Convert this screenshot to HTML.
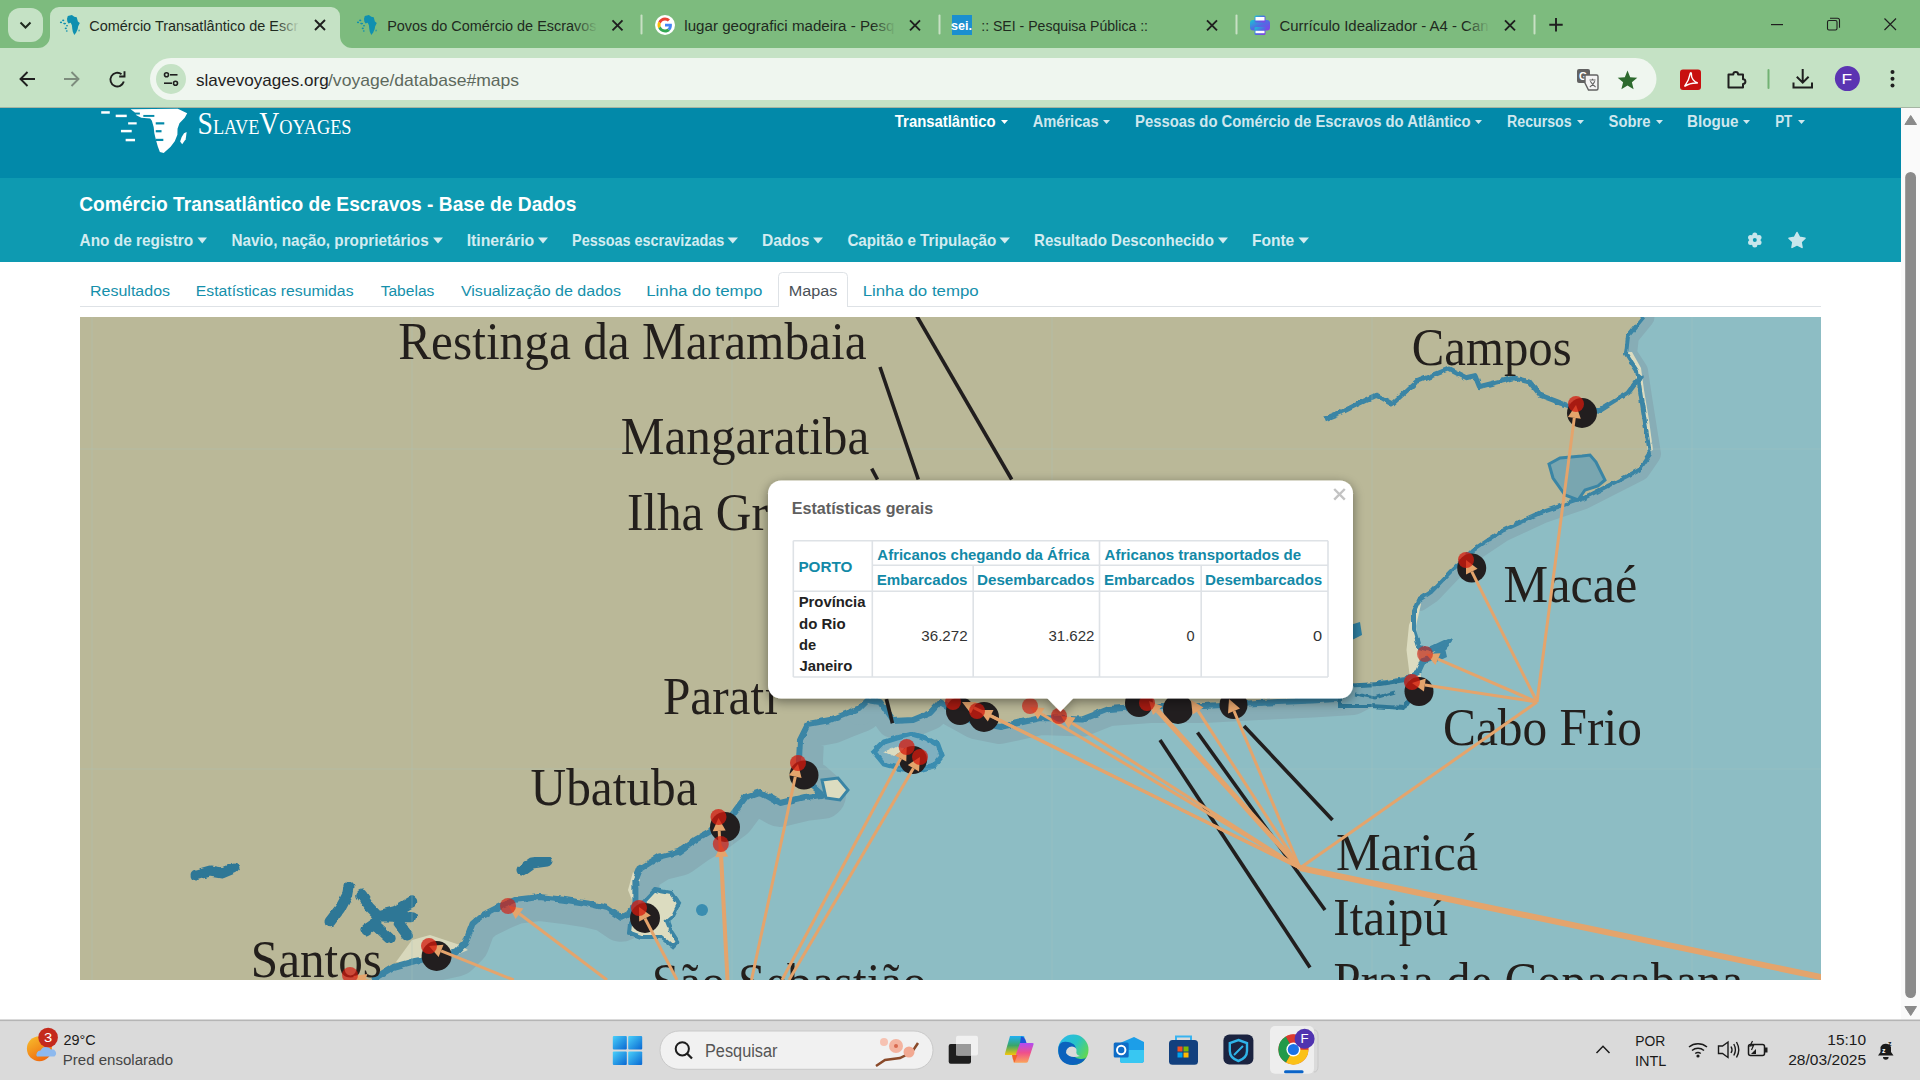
<!DOCTYPE html>
<html><head><meta charset="utf-8"><title>SlaveVoyages</title>
<style>*{margin:0;padding:0}html,body{width:1920px;height:1080px;overflow:hidden;background:#fff;font-family:"Liberation Sans",sans-serif}svg{display:block}</style>
</head><body>
<svg width="1920" height="1080" viewBox="0 0 1920 1080">
<rect x="0" y="0" width="1920" height="48" fill="#7dbb7e"/>
<rect x="8" y="8" width="35" height="34" rx="12" fill="#c5e2c5"/>
<path d="M20.5 22.5 L25.5 27.5 L30.5 22.5" fill="none" stroke="#1f2a1f" stroke-width="2"/>
<path d="M38 48 A12 12 0 0 0 50 36 V16 A9 9 0 0 1 59 7 H331 A9 9 0 0 1 340 16 V36 A12 12 0 0 0 352 48 Z" fill="#c5e2c5"/>
<g transform="translate(60,15)" fill="#0f90b0"><path d="M7.8 1.1 L11.9 0.1 L14.3 1.8 L16.7 2.3 L17.9 6.6 L19.8 8.1 L18.1 11.5 L17.7 13.9 L16.2 17.5 L14.3 19.9 L12.8 16.8 L12.3 13.9 L11.9 10.3 L10.7 7.8 L8.5 8.6 L7.3 6.6 L7 3.7Z M19.1 14.3 L19.8 15.8 L18.9 16.8 L18.4 15.6Z"/><ellipse cx="3.2" cy="5.4" rx="1.1" ry="0.8"/><ellipse cx="1" cy="7.4" rx="1.1" ry="0.8"/><ellipse cx="4.6" cy="8.6" rx="1.5" ry="0.8"/><ellipse cx="7" cy="10.7" rx="1" ry="0.8"/><ellipse cx="5.8" cy="13.4" rx="1.1" ry="0.8"/><ellipse cx="6.8" cy="16" rx="0.9" ry="0.8"/></g>
<text x="89.28" y="30.80" font-family='"Liberation Sans",sans-serif' font-size="15.5" font-weight="400" fill="#1f2a1f" textLength="208.95" lengthAdjust="spacingAndGlyphs" >Comércio Transatlântico de Escr</text>
<defs><linearGradient id="fa" x1="0" x2="1"><stop offset="0" stop-color="#c5e2c5" stop-opacity="0"/><stop offset="1" stop-color="#c5e2c5"/></linearGradient><linearGradient id="fg" x1="0" x2="1"><stop offset="0" stop-color="#7dbb7e" stop-opacity="0"/><stop offset="1" stop-color="#7dbb7e"/></linearGradient></defs>
<rect x="276" y="14" width="24" height="22" fill="url(#fa)"/>
<path d="M315 20L325 30M325 20L315 30" stroke="#1f1f1f" stroke-width="1.9"/>
<g transform="translate(357,15)" fill="#0f90b0"><path d="M7.8 1.1 L11.9 0.1 L14.3 1.8 L16.7 2.3 L17.9 6.6 L19.8 8.1 L18.1 11.5 L17.7 13.9 L16.2 17.5 L14.3 19.9 L12.8 16.8 L12.3 13.9 L11.9 10.3 L10.7 7.8 L8.5 8.6 L7.3 6.6 L7 3.7Z M19.1 14.3 L19.8 15.8 L18.9 16.8 L18.4 15.6Z"/><ellipse cx="3.2" cy="5.4" rx="1.1" ry="0.8"/><ellipse cx="1" cy="7.4" rx="1.1" ry="0.8"/><ellipse cx="4.6" cy="8.6" rx="1.5" ry="0.8"/><ellipse cx="7" cy="10.7" rx="1" ry="0.8"/><ellipse cx="5.8" cy="13.4" rx="1.1" ry="0.8"/><ellipse cx="6.8" cy="16" rx="0.9" ry="0.8"/></g>
<text x="387.15" y="30.80" font-family='"Liberation Sans",sans-serif' font-size="15.5" font-weight="400" fill="#1f2a1f" textLength="209.38" lengthAdjust="spacingAndGlyphs" >Povos do Comércio de Escravos</text>
<rect x="574" y="14" width="24" height="22" fill="url(#fg)"/>
<path d="M612.5 20.3L622.5 30.3M622.5 20.3L612.5 30.3" stroke="#1f1f1f" stroke-width="1.9"/>
<rect x="640.5" y="14.5" width="2" height="20" rx="1" fill="#c8e0c4"/>
<circle cx="665" cy="25" r="10" fill="#fff"/>
<g transform="translate(657.5,17.5) scale(0.3125)"><path fill="#EA4335" d="M24 9.5c3.5 0 6.6 1.2 9.1 3.6l6.8-6.8C35.8 2.4 30.3 0 24 0 14.6 0 6.6 5.4 2.6 13.3l7.9 6.1C12.4 13.6 17.7 9.5 24 9.5z"/><path fill="#4285F4" d="M46.1 24.5c0-1.6-.1-3.1-.4-4.5H24v9h12.4c-.5 2.9-2.2 5.3-4.6 6.9l7.7 6C43.9 37.7 46.1 31.6 46.1 24.5z"/><path fill="#FBBC05" d="M10.5 28.6c-.5-1.4-.8-3-.8-4.6s.3-3.2.8-4.6l-7.9-6.1C.9 16.6 0 20.2 0 24s.9 7.4 2.6 10.7l7.9-6.1z"/><path fill="#34A853" d="M24 48c6.5 0 11.9-2.1 15.9-5.8l-7.7-6c-2.2 1.5-5 2.3-8.2 2.3-6.3 0-11.6-4.2-13.5-9.9l-7.9 6.1C6.6 42.6 14.6 48 24 48z"/></g>
<text x="684.32" y="30.80" font-family='"Liberation Sans",sans-serif' font-size="15.5" font-weight="400" fill="#1f2a1f" textLength="210.09" lengthAdjust="spacingAndGlyphs" >lugar geografici madeira - Pesq</text>
<rect x="872" y="14" width="24" height="22" fill="url(#fg)"/>
<path d="M910 20.3L920 30.3M920 20.3L910 30.3" stroke="#1f1f1f" stroke-width="1.9"/>
<rect x="938.5" y="14.5" width="2" height="20" rx="1" fill="#c8e0c4"/>
<rect x="952" y="15" width="20" height="20" fill="#1b8fcf"/>
<text x="951" y="30" font-family='"Liberation Sans",sans-serif' font-size="13" font-weight="700" fill="#fff" textLength="21" lengthAdjust="spacingAndGlyphs">sei.</text>
<text x="981.23" y="30.80" font-family='"Liberation Sans",sans-serif' font-size="15.5" font-weight="400" fill="#1f2a1f" textLength="166.79" lengthAdjust="spacingAndGlyphs" >:: SEI - Pesquisa Pública ::</text>
<path d="M1207 20.3L1217 30.3M1217 20.3L1207 30.3" stroke="#1f1f1f" stroke-width="1.9"/>
<rect x="1235.5" y="14.5" width="2" height="20" rx="1" fill="#c8e0c4"/>
<defs><linearGradient id="pg" x1="0" y1="0" x2="1" y2="1"><stop offset="0" stop-color="#18c6d4"/><stop offset="0.5" stop-color="#4f6de2"/><stop offset="1" stop-color="#8a3ce6"/></linearGradient></defs>
<g transform="translate(1250,15)"><rect x="0" y="5" width="20" height="10.5" rx="3" fill="url(#pg)"/><rect x="4.5" y="0.5" width="11" height="7" rx="1.5" fill="url(#pg)"/><rect x="5.5" y="2" width="9" height="3.5" fill="#fff"/><rect x="4.5" y="12" width="11" height="8" rx="1.5" fill="url(#pg)"/><rect x="5.5" y="15.8" width="9" height="2.4" fill="#fff"/></g>
<text x="1279.55" y="30.80" font-family='"Liberation Sans",sans-serif' font-size="15.5" font-weight="400" fill="#1f2a1f" textLength="208.94" lengthAdjust="spacingAndGlyphs" >Currículo Idealizador - A4 - Can</text>
<rect x="1466" y="14" width="24" height="22" fill="url(#fg)"/>
<path d="M1505 20.3L1515 30.3M1515 20.3L1505 30.3" stroke="#1f1f1f" stroke-width="1.9"/>
<rect x="1533.5" y="14.5" width="2" height="20" rx="1" fill="#c8e0c4"/>
<path d="M1556 18V31.5M1549.3 24.7H1562.7" stroke="#1f1f1f" stroke-width="1.9"/>
<rect x="1771" y="24" width="12" height="1.2" fill="#1f1f1f"/>
<g fill="none" stroke="#1f1f1f" stroke-width="1.1"><rect x="1827.5" y="20.5" width="9.5" height="9.5" rx="1.5"/><path d="M1830 18.3 H1837.5 A2 2 0 0 1 1839.5 20.3 V27.8"/></g>
<path d="M1884.5 18.5L1896 30M1896 18.5L1884.5 30" stroke="#1f1f1f" stroke-width="1.2"/>
<rect x="0" y="48" width="1920" height="59" fill="#c5e2c5"/>
<rect x="0" y="107" width="1920" height="1" fill="#a5b5a3"/>
<path d="M35 79H21M27.5 72L20.5 79L27.5 86" fill="none" stroke="#1f1f1f" stroke-width="1.9"/>
<path d="M64 79H78M71.5 72L78.5 79L71.5 86" fill="none" stroke="#7d8c7d" stroke-width="1.9"/>
<path d="M123.8 81.5A6.8 6.8 0 1 1 121.5 74.3" fill="none" stroke="#1f1f1f" stroke-width="1.9"/><path d="M124.5 71.2V76.5H119.2" fill="none" stroke="#1f1f1f" stroke-width="1.9"/>
<rect x="150" y="58" width="1506.5" height="42" rx="21" fill="#eff6ef"/>
<circle cx="171" cy="79" r="15" fill="#c5e2c5"/>
<g fill="none" stroke="#1f1f1f" stroke-width="1.6"><circle cx="166.5" cy="74.8" r="2"/><path d="M170 74.8H177.5"/><circle cx="175.5" cy="83.2" r="2"/><path d="M164 83.2H172"/></g>
<text x="195.99" y="85.50" font-family='"Liberation Sans",sans-serif' font-size="17" font-weight="400" fill="#1f1f1f" textLength="132.66" lengthAdjust="spacingAndGlyphs" >slavevoyages.org</text>
<text x="328.00" y="85.50" font-family='"Liberation Sans",sans-serif' font-size="17" font-weight="400" fill="#5d695d" textLength="191.14" lengthAdjust="spacingAndGlyphs" >/voyage/database#maps</text>
<g transform="translate(1577,69)"><rect x="0" y="0" width="13" height="14" rx="2" fill="#626262"/><text x="2" y="11" font-family='"Liberation Sans",sans-serif' font-size="10.5" font-weight="700" fill="#fff">G</text><path d="M8 6H19.5A1.5 1.5 0 0 1 21 7.5V19.5A1.5 1.5 0 0 1 19.5 21H11.5L8 14Z" fill="#f4f4f4" stroke="#626262" stroke-width="1.4"/><path d="M12.5 11H18.5M15.5 9.8V11M13.3 12.2Q16 16.5 18.6 18M17.8 12.2Q16 16.5 12.8 18" fill="none" stroke="#626262" stroke-width="1.1"/></g>
<path d="M1627.5 70.5L1630.2 77.2L1637.3 77.7L1631.9 82.3L1633.6 89.3L1627.5 85.5L1621.4 89.3L1623.1 82.3L1617.7 77.7L1624.8 77.2Z" fill="#2d6a2e"/>
<rect x="1680" y="69.5" width="21" height="20.5" rx="3" fill="#c8100f"/>
<path d="M1684.5 86.5C1687 83 1689.5 78 1690.3 73.3C1690.8 72.3 1691.5 72.8 1691.4 74C1691 78 1694 82 1697.8 83C1693.8 82.8 1688 84 1684.5 86.5Z" fill="none" stroke="#fff" stroke-width="1.4"/>
<path d="M1728.5 74.5H1733.3A2.4 2.4 0 0 1 1738.1 74.5H1743V79.2A2.4 2.4 0 0 1 1743 84V87.5H1728.5Z" fill="none" stroke="#1f1f1f" stroke-width="2" stroke-linejoin="round"/>
<rect x="1767.5" y="69" width="2" height="20" rx="1" fill="#72b274"/>
<path d="M1802.7 69V82.5M1796.8 76.8L1802.7 82.7L1808.6 76.8M1793.5 82.5V87.5H1812V82.5" fill="none" stroke="#1f1f1f" stroke-width="2"/>
<circle cx="1847.4" cy="78.6" r="12.5" fill="#5b34b2"/>
<text x="1841.61" y="83.80" font-family='"Liberation Sans",sans-serif' font-size="14" font-weight="400" fill="#fff" textLength="10.60" lengthAdjust="spacingAndGlyphs" >F</text>
<circle cx="1892.5" cy="72" r="2" fill="#1f1f1f"/><circle cx="1892.5" cy="78.8" r="2" fill="#1f1f1f"/><circle cx="1892.5" cy="85.6" r="2" fill="#1f1f1f"/>
<rect x="0" y="108" width="1901" height="70" fill="#0289a9"/>
<rect x="0" y="178" width="1901" height="84" fill="#0e9ab1"/>
<g transform="translate(95,105) scale(0.13802)"><path fill="#fff" d="M258 30 L600 28 L668 60 L650 92 L612 132 L598 172 L597 215 L578 262 L548 302 L498 348 L470 340 L455 300 L442 255 L430 205 L425 160 L412 115 L400 98 L335 92 L300 75 L285 50 Z"/><path fill="#fff" d="M645 205 L664 196 L657 248 L632 284 L617 264 L628 232 Z"/><g fill="#fff"><rect x="45" y="45" width="62" height="18"/><rect x="150" y="70" width="80" height="18"/><rect x="240" y="125" width="62" height="16"/><rect x="188" y="180" width="78" height="18"/><rect x="222" y="245" width="68" height="18"/></g><g fill="#0289a9"><rect x="280" y="55" width="45" height="14"/><rect x="350" y="72" width="80" height="14"/><rect x="440" y="125" width="62" height="16"/><rect x="440" y="182" width="42" height="16"/><rect x="440" y="245" width="55" height="16"/></g></g>
<text x="197.5" y="133.8" font-family='"Liberation Serif",serif' fill="#fff" font-size="31" textLength="154" lengthAdjust="spacingAndGlyphs">S<tspan font-size="20.5">LAVE</tspan>V<tspan font-size="20.5">OYAGES</tspan></text>
<text x="894.85" y="127.00" font-family='"Liberation Sans",sans-serif' font-size="16" font-weight="700" fill="#ffffff" textLength="100.74" lengthAdjust="spacingAndGlyphs" >Transatlântico</text>
<path d="M1001 120H1008L1004.5 124Z" fill="#ffffff"/>
<text x="1032.63" y="127.00" font-family='"Liberation Sans",sans-serif' font-size="16" font-weight="700" fill="#cfe7ee" textLength="66.00" lengthAdjust="spacingAndGlyphs" >Américas</text>
<path d="M1103 120H1110L1106.5 124Z" fill="#cfe7ee"/>
<text x="1135.04" y="127.00" font-family='"Liberation Sans",sans-serif' font-size="16" font-weight="700" fill="#cfe7ee" textLength="335.59" lengthAdjust="spacingAndGlyphs" >Pessoas do Comércio de Escravos do Atlântico</text>
<path d="M1475 120H1482L1478.5 124Z" fill="#cfe7ee"/>
<text x="1507.08" y="127.00" font-family='"Liberation Sans",sans-serif' font-size="16" font-weight="700" fill="#cfe7ee" textLength="64.53" lengthAdjust="spacingAndGlyphs" >Recursos</text>
<path d="M1577 120H1584L1580.5 124Z" fill="#cfe7ee"/>
<text x="1608.56" y="127.00" font-family='"Liberation Sans",sans-serif' font-size="16" font-weight="700" fill="#cfe7ee" textLength="41.95" lengthAdjust="spacingAndGlyphs" >Sobre</text>
<path d="M1656 120H1663L1659.5 124Z" fill="#cfe7ee"/>
<text x="1687.01" y="127.00" font-family='"Liberation Sans",sans-serif' font-size="16" font-weight="700" fill="#cfe7ee" textLength="51.50" lengthAdjust="spacingAndGlyphs" >Blogue</text>
<path d="M1743 120H1750L1746.5 124Z" fill="#cfe7ee"/>
<text x="1775.13" y="127.00" font-family='"Liberation Sans",sans-serif' font-size="16" font-weight="700" fill="#cfe7ee" textLength="17.04" lengthAdjust="spacingAndGlyphs" >PT</text>
<path d="M1798 120H1805L1801.5 124Z" fill="#cfe7ee"/>
<text x="79.23" y="210.60" font-family='"Liberation Sans",sans-serif' font-size="20.5" font-weight="700" fill="#ffffff" textLength="497.22" lengthAdjust="spacingAndGlyphs" >Comércio Transatlântico de Escravos - Base de Dados</text>
<text x="79.62" y="246.40" font-family='"Liberation Sans",sans-serif' font-size="17" font-weight="700" fill="#d3ecf0" textLength="113.60" lengthAdjust="spacingAndGlyphs" >Ano de registro</text>
<path d="M197.5 237.5H207L202.25 243.5Z" fill="#d3ecf0"/>
<text x="231.51" y="246.40" font-family='"Liberation Sans",sans-serif' font-size="17" font-weight="700" fill="#d3ecf0" textLength="197.15" lengthAdjust="spacingAndGlyphs" >Navio, nação, proprietários</text>
<path d="M433 237.5H443L438.0 243.5Z" fill="#d3ecf0"/>
<text x="466.67" y="246.40" font-family='"Liberation Sans",sans-serif' font-size="17" font-weight="700" fill="#d3ecf0" textLength="67.54" lengthAdjust="spacingAndGlyphs" >Itinerário</text>
<path d="M538 237.5H548L543.0 243.5Z" fill="#d3ecf0"/>
<text x="572.06" y="246.40" font-family='"Liberation Sans",sans-serif' font-size="17" font-weight="700" fill="#d3ecf0" textLength="152.19" lengthAdjust="spacingAndGlyphs" >Pessoas escravizadas</text>
<path d="M727.5 237.5H738L732.75 243.5Z" fill="#d3ecf0"/>
<text x="761.99" y="246.40" font-family='"Liberation Sans",sans-serif' font-size="17" font-weight="700" fill="#d3ecf0" textLength="47.45" lengthAdjust="spacingAndGlyphs" >Dados</text>
<path d="M813 237.5H823L818.0 243.5Z" fill="#d3ecf0"/>
<text x="847.39" y="246.40" font-family='"Liberation Sans",sans-serif' font-size="17" font-weight="700" fill="#d3ecf0" textLength="148.82" lengthAdjust="spacingAndGlyphs" >Capitão e Tripulação</text>
<path d="M999.5 237.5H1010L1004.75 243.5Z" fill="#d3ecf0"/>
<text x="1034.02" y="246.40" font-family='"Liberation Sans",sans-serif' font-size="17" font-weight="700" fill="#d3ecf0" textLength="180.01" lengthAdjust="spacingAndGlyphs" >Resultado Desconhecido</text>
<path d="M1218 237.5H1228L1223.0 243.5Z" fill="#d3ecf0"/>
<text x="1251.99" y="246.40" font-family='"Liberation Sans",sans-serif' font-size="17" font-weight="700" fill="#d3ecf0" textLength="42.28" lengthAdjust="spacingAndGlyphs" >Fonte</text>
<path d="M1298.5 237.5H1309L1303.75 243.5Z" fill="#d3ecf0"/>
<g transform="translate(1754.8,240)" fill="#c8e6ec"><circle r="5.6"/><circle cx="0.00" cy="-4.90" r="2.5"/><circle cx="4.24" cy="-2.45" r="2.5"/><circle cx="4.24" cy="2.45" r="2.5"/><circle cx="0.00" cy="4.90" r="2.5"/><circle cx="-4.24" cy="2.45" r="2.5"/><circle cx="-4.24" cy="-2.45" r="2.5"/><circle r="2" fill="#0e9ab1"/></g>
<path d="M1797 232.5L1799.5 237.4L1805 238.2L1801 242L1802 247.4L1797 244.8L1792 247.4L1793 242L1789 238.2L1794.5 237.4Z" fill="#c8e6ec" stroke="#c8e6ec" stroke-width="1.6" stroke-linejoin="round"/>
<rect x="80" y="306" width="1741" height="1" fill="#dee2e6"/>
<path d="M778.5 307V276.5A4 4 0 0 1 782.5 272.5H843.5A4 4 0 0 1 847.5 276.5V307" fill="#fff" stroke="#dee2e6" stroke-width="1"/>
<rect x="779" y="305.5" width="68" height="2" fill="#fff"/>
<text x="89.97" y="296.00" font-family='"Liberation Sans",sans-serif' font-size="15.5" font-weight="400" fill="#1590ab" textLength="80.06" lengthAdjust="spacingAndGlyphs" >Resultados</text>
<text x="195.74" y="296.00" font-family='"Liberation Sans",sans-serif' font-size="15.5" font-weight="400" fill="#1590ab" textLength="157.79" lengthAdjust="spacingAndGlyphs" >Estatísticas resumidas</text>
<text x="380.69" y="296.00" font-family='"Liberation Sans",sans-serif' font-size="15.5" font-weight="400" fill="#1590ab" textLength="53.64" lengthAdjust="spacingAndGlyphs" >Tabelas</text>
<text x="460.92" y="296.00" font-family='"Liberation Sans",sans-serif' font-size="15.5" font-weight="400" fill="#1590ab" textLength="160.13" lengthAdjust="spacingAndGlyphs" >Visualização de dados</text>
<text x="646.15" y="296.00" font-family='"Liberation Sans",sans-serif' font-size="15.5" font-weight="400" fill="#1590ab" textLength="116.26" lengthAdjust="spacingAndGlyphs" >Linha do tempo</text>
<text x="862.65" y="296.00" font-family='"Liberation Sans",sans-serif' font-size="15.5" font-weight="400" fill="#1590ab" textLength="116.01" lengthAdjust="spacingAndGlyphs" >Linha do tempo</text>
<text x="788.70" y="296.00" font-family='"Liberation Sans",sans-serif' font-size="15.5" font-weight="400" fill="#495057" textLength="48.64" lengthAdjust="spacingAndGlyphs" >Mapas</text>
<rect x="1901" y="108" width="19" height="912" fill="#fafafa"/>
<path d="M1910.7 115.5L1916.5 124.5H1904.9Z" fill="#8a8a8a" stroke="#8a8a8a" stroke-width="1" stroke-linejoin="round"/>
<rect x="1905.2" y="172" width="10.8" height="826" rx="5.4" fill="#8a8a8a"/>
<path d="M1910.7 1015.5L1916.5 1006.5H1904.9Z" fill="#8a8a8a" stroke="#8a8a8a" stroke-width="1" stroke-linejoin="round"/>
<defs><clipPath id="mc"><rect x="80" y="317" width="1741" height="663"/></clipPath>
<clipPath id="sc"><path d="M371.9 980.0 L393.4 967.0 L415.0 961.0 L436.0 957.0 L455.7 952.5 L465.3 943.0 L472.5 923.7 L482.0 915.4 L501.2 905.8 L515.6 899.8 L539.6 897.0 L563.5 899.8 L587.5 903.4 L606.7 908.0 L621.0 917.8 L628.2 914.2 L635.4 904.6 L635.4 880.6 L640.2 868.6 L659.4 856.7 L678.5 851.9 L695.3 839.9 L712.0 830.3 L731.2 816.0 L745.6 796.8 L760.0 792.0 L780.0 803.0 L805.0 797.0 L822.0 795.0 L812.0 786.0 L800.0 781.0 L799.0 760.0 L800.0 740.0 L808.0 724.0 L830.0 720.0 L847.0 713.0 L860.0 708.0 L868.0 700.0 L880.0 702.0 L893.0 721.0 L913.0 720.0 L930.0 713.0 L940.0 702.0 L957.0 712.0 L975.0 722.0 L1000.0 727.0 L1041.0 718.0 L1082.0 719.6 L1109.0 709.0 L1150.0 706.0 L1204.0 706.0 L1258.0 703.0 L1312.0 700.6 L1353.0 698.0 L1380.0 684.0 L1405.0 680.0 L1418.0 672.0 L1423.0 661.0 L1434.0 658.0 L1449.0 641.0 L1430.0 650.0 L1419.0 647.0 L1414.0 630.0 L1414.0 611.0 L1419.0 600.0 L1431.0 592.0 L1451.0 571.0 L1472.0 551.0 L1502.0 531.0 L1543.0 512.0 L1584.0 498.0 L1639.0 470.0 L1650.0 454.0 L1641.0 397.5 L1637.0 371.0 L1626.0 354.0 L1628.0 336.0 L1643.5 317.0 L1821 317 L1821 980 Z"/></clipPath>
<filter id="rough" x="-5%" y="-5%" width="110%" height="110%"><feTurbulence type="fractalNoise" baseFrequency="0.12" numOctaves="2" seed="3"/><feDisplacementMap in="SourceGraphic" scale="4" xChannelSelector="R" yChannelSelector="G"/></filter></defs>
<g clip-path="url(#mc)">
<rect x="80" y="317" width="1741" height="663" fill="#bab898"/>
<path d="M371.9 980.0 L393.4 967.0 L415.0 961.0 L436.0 957.0 L455.7 952.5 L465.3 943.0 L472.5 923.7 L482.0 915.4 L501.2 905.8 L515.6 899.8 L539.6 897.0 L563.5 899.8 L587.5 903.4 L606.7 908.0 L621.0 917.8 L628.2 914.2 L635.4 904.6 L635.4 880.6 L640.2 868.6 L659.4 856.7 L678.5 851.9 L695.3 839.9 L712.0 830.3 L731.2 816.0 L745.6 796.8 L760.0 792.0 L780.0 803.0 L805.0 797.0 L822.0 795.0 L812.0 786.0 L800.0 781.0 L799.0 760.0 L800.0 740.0 L808.0 724.0 L830.0 720.0 L847.0 713.0 L860.0 708.0 L868.0 700.0 L880.0 702.0 L893.0 721.0 L913.0 720.0 L930.0 713.0 L940.0 702.0 L957.0 712.0 L975.0 722.0 L1000.0 727.0 L1041.0 718.0 L1082.0 719.6 L1109.0 709.0 L1150.0 706.0 L1204.0 706.0 L1258.0 703.0 L1312.0 700.6 L1353.0 698.0 L1380.0 684.0 L1405.0 680.0 L1418.0 672.0 L1423.0 661.0 L1434.0 658.0 L1449.0 641.0 L1430.0 650.0 L1419.0 647.0 L1414.0 630.0 L1414.0 611.0 L1419.0 600.0 L1431.0 592.0 L1451.0 571.0 L1472.0 551.0 L1502.0 531.0 L1543.0 512.0 L1584.0 498.0 L1639.0 470.0 L1650.0 454.0 L1641.0 397.5 L1637.0 371.0 L1626.0 354.0 L1628.0 336.0 L1643.5 317.0 L1821 317 L1821 980 Z" fill="#8dbdc4"/>
<g clip-path="url(#sc)"><path d="M371.9 980.0 L393.4 967.0 L415.0 961.0 L436.0 957.0 L455.7 952.5 L465.3 943.0 L472.5 923.7 L482.0 915.4 L501.2 905.8 L515.6 899.8 L539.6 897.0 L563.5 899.8 L587.5 903.4 L606.7 908.0 L621.0 917.8 L628.2 914.2 L635.4 904.6 L635.4 880.6 L640.2 868.6 L659.4 856.7 L678.5 851.9 L695.3 839.9 L712.0 830.3 L731.2 816.0 L745.6 796.8 L760.0 792.0 L780.0 803.0 L805.0 797.0 L822.0 795.0 L812.0 786.0 L800.0 781.0 L799.0 760.0 L800.0 740.0 L808.0 724.0 L830.0 720.0 L847.0 713.0 L860.0 708.0 L868.0 700.0 L880.0 702.0 L893.0 721.0 L913.0 720.0 L930.0 713.0 L940.0 702.0 L957.0 712.0 L975.0 722.0 L1000.0 727.0 L1041.0 718.0 L1082.0 719.6 L1109.0 709.0 L1150.0 706.0 L1204.0 706.0 L1258.0 703.0 L1312.0 700.6 L1353.0 698.0 L1380.0 684.0 L1405.0 680.0 L1418.0 672.0 L1423.0 661.0 L1434.0 658.0 L1449.0 641.0 L1430.0 650.0 L1419.0 647.0 L1414.0 630.0 L1414.0 611.0 L1419.0 600.0 L1431.0 592.0 L1451.0 571.0 L1472.0 551.0 L1502.0 531.0 L1543.0 512.0 L1584.0 498.0 L1639.0 470.0 L1650.0 454.0 L1641.0 397.5 L1637.0 371.0 L1626.0 354.0 L1628.0 336.0 L1643.5 317.0" fill="none" stroke="#87adb6" stroke-width="0" stroke-linejoin="round"/><path d="M371.9 980.0 L393.4 967.0 L415.0 961.0 L436.0 957.0 L455.7 952.5 L465.3 943.0 L472.5 923.7 L482.0 915.4 L501.2 905.8 L515.6 899.8 L539.6 897.0 L563.5 899.8 L587.5 903.4 L606.7 908.0 L621.0 917.8 L628.2 914.2 L635.4 904.6 L635.4 880.6 L640.2 868.6 L659.4 856.7 L678.5 851.9 L695.3 839.9 L712.0 830.3 L731.2 816.0 L745.6 796.8 L760.0 792.0 L780.0 803.0 L805.0 797.0 L822.0 795.0 L812.0 786.0 L800.0 781.0 L799.0 760.0 L800.0 740.0 L808.0 724.0 L830.0 720.0 L847.0 713.0 L860.0 708.0 L868.0 700.0 L880.0 702.0" fill="none" stroke="#87adb6" stroke-width="48" stroke-linejoin="round" stroke-linecap="round"/><path d="M860.0 708.0 L868.0 700.0 L880.0 702.0 L893.0 721.0 L913.0 720.0 L930.0 713.0 L940.0 702.0 L957.0 712.0 L975.0 722.0 L1000.0 727.0 L1041.0 718.0 L1082.0 719.6 L1109.0 709.0 L1150.0 706.0 L1204.0 706.0 L1258.0 703.0 L1312.0 700.6 L1353.0 698.0 L1380.0 684.0 L1405.0 680.0" fill="none" stroke="#87adb6" stroke-width="34" stroke-linejoin="round" stroke-linecap="round"/><path d="M1419.0 600.0 L1431.0 592.0 L1451.0 571.0 L1472.0 551.0 L1502.0 531.0 L1543.0 512.0 L1584.0 498.0 L1639.0 470.0 L1650.0 454.0 L1641.0 397.5 L1637.0 371.0 L1626.0 354.0 L1628.0 336.0 L1643.5 317.0" fill="none" stroke="#87adb6" stroke-width="22" stroke-linejoin="round" stroke-linecap="round"/></g>
<path d="M1418 602 L1409 625 L1406.5 650 L1410 678 L1421 677 L1418 650 L1416 626 L1421 604Z" fill="#dcdcc0"/>
<path d="M1627 352 L1630 362 L1636 375 L1640 400 L1645 430 L1648 452 L1653 450 L1649 420 L1644 390 L1641 368 L1632 352Z" fill="#dcdcc0"/>
<path d="M396 962 L412 940 L430 935 L460 945 L468 950 L440 962Z" fill="#dcdcc0" opacity="0.9"/>
<path d="M633 872 L628 890 L634 905 L640 880Z" fill="#dcdcc0"/>
<g filter="url(#rough)"><path d="M371.9 980.0 L393.4 967.0 L415.0 961.0 L436.0 957.0 L455.7 952.5 L465.3 943.0 L472.5 923.7 L482.0 915.4 L501.2 905.8 L515.6 899.8 L539.6 897.0 L563.5 899.8 L587.5 903.4 L606.7 908.0 L621.0 917.8 L628.2 914.2 L635.4 904.6 L635.4 880.6 L640.2 868.6 L659.4 856.7 L678.5 851.9 L695.3 839.9 L712.0 830.3 L731.2 816.0 L745.6 796.8 L760.0 792.0 L780.0 803.0 L805.0 797.0 L822.0 795.0 L812.0 786.0 L800.0 781.0 L799.0 760.0 L800.0 740.0 L808.0 724.0 L830.0 720.0 L847.0 713.0 L860.0 708.0 L868.0 700.0 L880.0 702.0 L893.0 721.0 L913.0 720.0 L930.0 713.0 L940.0 702.0 L957.0 712.0 L975.0 722.0 L1000.0 727.0 L1041.0 718.0 L1082.0 719.6 L1109.0 709.0 L1150.0 706.0 L1204.0 706.0 L1258.0 703.0 L1312.0 700.6 L1353.0 698.0 L1380.0 684.0 L1405.0 680.0 L1418.0 672.0 L1423.0 661.0 L1434.0 658.0 L1449.0 641.0 L1430.0 650.0" fill="none" stroke="#3a85a5" stroke-width="6" stroke-linejoin="round"/><path d="M1449.0 641.0 L1430.0 650.0 L1419.0 647.0 L1414.0 630.0 L1414.0 611.0 L1419.0 600.0 L1431.0 592.0 L1451.0 571.0 L1472.0 551.0 L1502.0 531.0 L1543.0 512.0 L1584.0 498.0 L1639.0 470.0 L1650.0 454.0 L1641.0 397.5 L1637.0 371.0 L1626.0 354.0 L1628.0 336.0 L1643.5 317.0" fill="none" stroke="#3a85a5" stroke-width="4" stroke-linejoin="round"/></g>
<g filter="url(#rough)"><path d="M655.0 890.0 L671.0 893.0 L679.0 904.0 L673.0 916.0 L667.0 921.0 L671.0 931.0 L678.0 942.0 L673.0 947.0 L661.0 937.0 L641.0 937.0 L630.0 933.0 L631.0 924.0 L640.0 906.0 Z" fill="#dcdcc0" stroke="#3a85a5" stroke-width="4"/></g>
<g filter="url(#rough)"><path d="M874.0 752.0 L884.0 742.0 L897.0 738.0 L912.0 734.0 L926.0 738.0 L938.0 745.0 L942.0 756.0 L934.0 766.0 L915.0 771.0 L898.0 768.0 L884.0 764.0 Z" fill="#7fb0c0" stroke="#3a8db0" stroke-width="5"/><path d="M884 752 L896 746 L905 750 L893 756Z" fill="#dcdcc0"/></g>
<path d="M822.0 780.0 L838.0 778.0 L848.0 790.0 L840.0 800.0 L826.0 798.0 Z" fill="#dcdcc0" stroke="#3a85a5" stroke-width="3"/>
<g filter="url(#rough)" fill="none" stroke="#2f7796" stroke-width="11" stroke-linecap="round" stroke-linejoin="round"><path d="M330 921.7 L340.8 907.5 L347.5 895 L349 886.7"/><path d="M361.7 895 L370 907.5 L378.3 915.8 L395 911.7 L411.7 901.7 M378.3 915.8 L411.7 916.7 M365.8 930 L374.2 924.2 L389.2 938.3 M399.2 924.2 L407.5 935"/><path d="M196 875 L210 871 L222 873 L234 868"/><path d="M522 870 L532 863 L547 861"/></g>
<g filter="url(#rough)"><path d="M1324.0 419.0 L1344.0 411.0 L1360.0 403.0 L1376.6 395.3 L1392.0 404.0 L1416.0 382.0 L1448.8 369.0 L1466.0 377.8 L1475.0 375.6 L1479.4 386.6 L1514.0 377.8 L1529.7 382.0 L1540.6 395.3 L1569.0 406.0 L1599.7 410.6 L1628.0 393.0 L1641.0 375.6" fill="none" stroke="#3a85a5" stroke-width="5" stroke-linejoin="round"/></g>
<path d="M1549.0 464.0 L1560.0 458.0 L1582.0 456.0 L1590.0 455.0 L1596.0 462.0 L1605.0 480.0 L1598.0 486.0 L1585.0 490.0 L1578.0 500.0 L1565.0 495.0 L1553.0 478.0 Z" fill="#79a6b0" stroke="#3a85a5" stroke-width="3"/>
<g filter="url(#rough)"><path d="M1340 686 L1380 684 L1405 680 L1412 695 L1404 708 L1370 706 L1340 706Z" fill="#79a7b3" stroke="#2f7796" stroke-width="4"/><path d="M1355 694 L1375 698 L1395 692" fill="none" stroke="#2f7796" stroke-width="3"/></g>
<path d="M1350 625 L1360 622 L1362 635 L1352 640Z" fill="#2f7fa0"/>
<path d="M1432 654 L1444 644 L1447 657 L1434 663Z" fill="#3a85a5"/>
<circle cx="1040" cy="984" r="2" fill="#2f7fa0"/>
<circle cx="702" cy="910" r="6" fill="#3a8db0"/>
<rect x="91.5" y="317" width="1" height="663" fill="#a6c4c0" opacity="0.35"/>
<rect x="411.5" y="317" width="1" height="663" fill="#a6c4c0" opacity="0.35"/>
<rect x="731.5" y="317" width="1" height="663" fill="#a6c4c0" opacity="0.35"/>
<rect x="1051.5" y="317" width="1" height="663" fill="#a6c4c0" opacity="0.35"/>
<rect x="1371.5" y="317" width="1" height="663" fill="#a6c4c0" opacity="0.35"/>
<rect x="1691.5" y="317" width="1" height="663" fill="#a6c4c0" opacity="0.35"/>
<rect x="80" y="448.5" width="1741" height="1" fill="#a6c4c0" opacity="0.35"/>
<rect x="80" y="768.5" width="1741" height="1" fill="#a6c4c0" opacity="0.35"/>
<text x="398.22" y="359.10" font-family='"Liberation Serif",serif' font-size="52.7" font-weight="400" fill="#231f1c" textLength="468.34" lengthAdjust="spacingAndGlyphs" >Restinga da Marambaia</text>
<text x="620.83" y="454.00" font-family='"Liberation Serif",serif' font-size="52.7" font-weight="400" fill="#231f1c" textLength="248.42" lengthAdjust="spacingAndGlyphs" >Mangaratiba</text>
<text x="626.88" y="530.10" font-family='"Liberation Serif",serif' font-size="52.7" font-weight="400" fill="#231f1c" textLength="233.93" lengthAdjust="spacingAndGlyphs" >Ilha Grande</text>
<text x="662.92" y="713.50" font-family='"Liberation Serif",serif' font-size="52.7" font-weight="400" fill="#231f1c" textLength="114.93" lengthAdjust="spacingAndGlyphs" >Parati</text>
<text x="530.61" y="805.00" font-family='"Liberation Serif",serif' font-size="52.7" font-weight="400" fill="#231f1c" textLength="167.01" lengthAdjust="spacingAndGlyphs" >Ubatuba</text>
<text x="250.80" y="977.00" font-family='"Liberation Serif",serif' font-size="52.7" font-weight="400" fill="#231f1c" textLength="131.17" lengthAdjust="spacingAndGlyphs" >Santos</text>
<text x="651.80" y="999.50" font-family='"Liberation Serif",serif' font-size="52.7" font-weight="400" fill="#231f1c" textLength="275.07" lengthAdjust="spacingAndGlyphs" >São Sebastião</text>
<text x="1411.85" y="364.70" font-family='"Liberation Serif",serif' font-size="52.7" font-weight="400" fill="#231f1c" textLength="159.75" lengthAdjust="spacingAndGlyphs" >Campos</text>
<text x="1503.49" y="602.00" font-family='"Liberation Serif",serif' font-size="52.7" font-weight="400" fill="#231f1c" textLength="133.84" lengthAdjust="spacingAndGlyphs" >Macaé</text>
<text x="1443.03" y="745.00" font-family='"Liberation Serif",serif' font-size="52.7" font-weight="400" fill="#231f1c" textLength="198.85" lengthAdjust="spacingAndGlyphs" >Cabo Frio</text>
<text x="1335.99" y="870.00" font-family='"Liberation Serif",serif' font-size="52.7" font-weight="400" fill="#231f1c" textLength="142.08" lengthAdjust="spacingAndGlyphs" >Maricá</text>
<text x="1333.28" y="935.00" font-family='"Liberation Serif",serif' font-size="52.7" font-weight="400" fill="#231f1c" textLength="114.84" lengthAdjust="spacingAndGlyphs" >Itaipú</text>
<text x="1333.53" y="998.50" font-family='"Liberation Serif",serif' font-size="52.7" font-weight="400" fill="#231f1c" textLength="409.68" lengthAdjust="spacingAndGlyphs" >Praia de Copacabana</text>
<line x1="913.3" y1="310" x2="1011.7" y2="479.5" stroke="#211e1e" stroke-width="3.6"/>
<line x1="880" y1="367" x2="918.3" y2="479.5" stroke="#211e1e" stroke-width="3.6"/>
<line x1="871.7" y1="468.7" x2="877.5" y2="479.5" stroke="#211e1e" stroke-width="3.6"/>
<line x1="886.4" y1="699" x2="892.4" y2="723.3" stroke="#211e1e" stroke-width="3.6"/>
<line x1="1160" y1="740" x2="1310" y2="967.5" stroke="#211e1e" stroke-width="3.6"/>
<line x1="1197.5" y1="732.5" x2="1325" y2="910" stroke="#211e1e" stroke-width="3.6"/>
<line x1="1244" y1="726" x2="1332.5" y2="820" stroke="#211e1e" stroke-width="3.6"/>
<circle cx="436.6" cy="956" r="15" fill="#221e1f"/>
<circle cx="645" cy="918" r="15" fill="#221e1f"/>
<circle cx="725" cy="827" r="15" fill="#221e1f"/>
<circle cx="804" cy="775" r="14.5" fill="#221e1f"/>
<circle cx="913" cy="760" r="14" fill="#221e1f"/>
<circle cx="960" cy="711" r="14" fill="#221e1f"/>
<circle cx="984" cy="717" r="15" fill="#221e1f"/>
<circle cx="1139" cy="703" r="14" fill="#221e1f"/>
<circle cx="1178" cy="709" r="15" fill="#221e1f"/>
<circle cx="1233.5" cy="705" r="14" fill="#221e1f"/>
<circle cx="1419" cy="691.5" r="14.5" fill="#221e1f"/>
<circle cx="1471.7" cy="568" r="14.5" fill="#221e1f"/>
<circle cx="1582" cy="413" r="15" fill="#221e1f"/>
<line x1="1300" y1="868" x2="1830" y2="979" stroke="#e4a46c" stroke-width="6"/>
<line x1="1300" y1="868" x2="1537" y2="702" stroke="#e4a46c" stroke-width="3"/>
<line x1="1300" y1="868" x2="990.7" y2="715.7" stroke="#e4a46c" stroke-width="3"/><path d="M979.0 710.0 L993.5 709.9 L987.8 721.6Z" fill="#e4a46c"/>
<line x1="1300" y1="868" x2="973.7" y2="707.7" stroke="#e4a46c" stroke-width="3"/><path d="M962.0 702.0 L976.5 701.9 L970.8 713.6Z" fill="#e4a46c"/>
<line x1="1300" y1="868" x2="1041.2" y2="713.7" stroke="#e4a46c" stroke-width="3"/><path d="M1030.0 707.0 L1044.5 708.1 L1037.8 719.2Z" fill="#e4a46c"/>
<line x1="1300" y1="868" x2="1072.0" y2="723.0" stroke="#e4a46c" stroke-width="3"/><path d="M1061.0 716.0 L1075.5 717.5 L1068.5 728.5Z" fill="#e4a46c"/>
<line x1="1300" y1="868" x2="1157.7" y2="710.6" stroke="#e4a46c" stroke-width="5"/><path d="M1149.0 701.0 L1162.5 706.3 L1152.9 715.0Z" fill="#e4a46c"/>
<line x1="1300" y1="868" x2="1198.1" y2="710.9" stroke="#e4a46c" stroke-width="3"/><path d="M1191.0 700.0 L1203.5 707.4 L1192.6 714.4Z" fill="#e4a46c"/>
<line x1="1300" y1="868" x2="1234.0" y2="711.0" stroke="#e4a46c" stroke-width="3"/><path d="M1229.0 699.0 L1240.0 708.5 L1228.0 713.5Z" fill="#e4a46c"/>
<line x1="1537" y1="702" x2="1574.3" y2="417.9" stroke="#e4a46c" stroke-width="3"/><path d="M1576.0 405.0 L1580.8 418.7 L1567.9 417.0Z" fill="#e4a46c"/>
<line x1="1537" y1="702" x2="1471.8" y2="571.6" stroke="#e4a46c" stroke-width="3"/><path d="M1466.0 560.0 L1477.6 568.7 L1466.0 574.5Z" fill="#e4a46c"/>
<line x1="1537" y1="702" x2="1437.9" y2="659.2" stroke="#e4a46c" stroke-width="3"/><path d="M1426.0 654.0 L1440.5 653.2 L1435.4 665.1Z" fill="#e4a46c"/>
<line x1="1537" y1="702" x2="1424.9" y2="685.0" stroke="#e4a46c" stroke-width="3"/><path d="M1412.0 683.0 L1425.8 678.5 L1423.9 691.4Z" fill="#e4a46c"/>
<line x1="400" y1="992" x2="365.3" y2="980.2" stroke="#e4a46c" stroke-width="3"/><path d="M353.0 976.0 L367.4 974.0 L363.2 986.3Z" fill="#e4a46c"/>
<line x1="513.7" y1="980" x2="441.1" y2="950.8" stroke="#e4a46c" stroke-width="3"/><path d="M429.0 946.0 L443.5 944.8 L438.6 956.9Z" fill="#e4a46c"/>
<line x1="607" y1="980" x2="519.4" y2="913.8" stroke="#e4a46c" stroke-width="3"/><path d="M509.0 906.0 L523.3 908.6 L515.5 919.0Z" fill="#e4a46c"/>
<line x1="677" y1="980" x2="645.0" y2="918.5" stroke="#e4a46c" stroke-width="3"/><path d="M639.0 907.0 L650.8 915.5 L639.2 921.5Z" fill="#e4a46c"/>
<line x1="728" y1="980" x2="721.7" y2="857.0" stroke="#e4a46c" stroke-width="3"/><path d="M721.0 844.0 L728.2 856.6 L715.2 857.3Z" fill="#e4a46c"/>
<line x1="727" y1="980" x2="719.2" y2="831.0" stroke="#e4a46c" stroke-width="3"/><path d="M718.5 818.0 L725.7 830.6 L712.7 831.3Z" fill="#e4a46c"/>
<line x1="751.5" y1="980" x2="795.3" y2="776.7" stroke="#e4a46c" stroke-width="3"/><path d="M798.0 764.0 L801.6 778.1 L788.9 775.3Z" fill="#e4a46c"/>
<line x1="782" y1="980" x2="900.6" y2="758.5" stroke="#e4a46c" stroke-width="3"/><path d="M906.7 747.0 L906.3 761.5 L894.8 755.4Z" fill="#e4a46c"/>
<line x1="789" y1="980" x2="913.4" y2="768.2" stroke="#e4a46c" stroke-width="3"/><path d="M920.0 757.0 L919.0 771.5 L907.8 764.9Z" fill="#e4a46c"/>
<circle cx="429" cy="946" r="8" fill="#d41a0e" opacity="0.75"/>
<circle cx="508" cy="906" r="8" fill="#d41a0e" opacity="0.66"/>
<circle cx="639" cy="908" r="8" fill="#d41a0e" opacity="0.75"/>
<circle cx="718.5" cy="817" r="8" fill="#d41a0e" opacity="0.75"/>
<circle cx="720.8" cy="844" r="8" fill="#d41a0e" opacity="0.70"/>
<circle cx="798" cy="763" r="8" fill="#d41a0e" opacity="0.75"/>
<circle cx="906.7" cy="747" r="8" fill="#d41a0e" opacity="0.75"/>
<circle cx="920" cy="757" r="8" fill="#d41a0e" opacity="0.75"/>
<circle cx="953" cy="702" r="8" fill="#d41a0e" opacity="0.75"/>
<circle cx="977" cy="711" r="8" fill="#d41a0e" opacity="0.75"/>
<circle cx="1030" cy="706" r="8" fill="#d41a0e" opacity="0.66"/>
<circle cx="1059" cy="716" r="8" fill="#d41a0e" opacity="0.70"/>
<circle cx="1147" cy="703" r="8" fill="#d41a0e" opacity="0.75"/>
<circle cx="1412" cy="682" r="8" fill="#d41a0e" opacity="0.75"/>
<circle cx="1425" cy="654" r="8" fill="#d41a0e" opacity="0.57"/>
<circle cx="1466" cy="560" r="8" fill="#d41a0e" opacity="0.75"/>
<circle cx="1576" cy="404" r="8" fill="#d41a0e" opacity="0.75"/>
<circle cx="350" cy="975" r="8" fill="#d41a0e" opacity="0.70"/>
</g>
<defs><filter id="sh" x="-10%" y="-20%" width="120%" height="150%"><feGaussianBlur in="SourceAlpha" stdDeviation="6"/><feOffset dy="3"/><feComponentTransfer><feFuncA type="linear" slope="0.45"/></feComponentTransfer><feMerge><feMergeNode/><feMergeNode in="SourceGraphic"/></feMerge></filter></defs>
<g filter="url(#sh)"><rect x="768" y="480.5" width="585" height="218" rx="13" fill="#fff"/><path d="M1047 698 L1060.4 711.7 L1073.5 698Z" fill="#fff"/></g>
<path d="M1334.2 489L1344.8 499.6M1344.8 489L1334.2 499.6" stroke="#c3c3c3" stroke-width="2.4"/>
<text x="791.75" y="514.00" font-family='"Liberation Sans",sans-serif' font-size="16" font-weight="700" fill="#5f5f5f" textLength="141.44" lengthAdjust="spacingAndGlyphs" >Estatísticas gerais</text>
<line x1="793.3" y1="540.7" x2="1328" y2="540.7" stroke="#dee2e6" stroke-width="1.6"/>
<line x1="872.3" y1="565.2" x2="1328" y2="565.2" stroke="#dee2e6" stroke-width="1.6"/>
<line x1="793.3" y1="591.25" x2="1328" y2="591.25" stroke="#dee2e6" stroke-width="1.6"/>
<line x1="793.3" y1="677" x2="1328" y2="677" stroke="#dee2e6" stroke-width="1.6"/>
<line x1="793.3" y1="540.7" x2="793.3" y2="677" stroke="#dee2e6" stroke-width="1.6"/>
<line x1="872.3" y1="540.7" x2="872.3" y2="677" stroke="#dee2e6" stroke-width="1.6"/>
<line x1="973.2" y1="565.2" x2="973.2" y2="677" stroke="#dee2e6" stroke-width="1.6"/>
<line x1="1099.5" y1="540.7" x2="1099.5" y2="677" stroke="#dee2e6" stroke-width="1.6"/>
<line x1="1201.2" y1="565.2" x2="1201.2" y2="677" stroke="#dee2e6" stroke-width="1.6"/>
<line x1="1328" y1="540.7" x2="1328" y2="677" stroke="#dee2e6" stroke-width="1.6"/>
<text x="798.41" y="571.70" font-family='"Liberation Sans",sans-serif' font-size="15" font-weight="700" fill="#1289a7" textLength="53.94" lengthAdjust="spacingAndGlyphs" >PORTO</text>
<text x="877.33" y="560.00" font-family='"Liberation Sans",sans-serif' font-size="15" font-weight="700" fill="#1289a7" textLength="212.23" lengthAdjust="spacingAndGlyphs" >Africanos chegando da África</text>
<text x="1104.62" y="560.00" font-family='"Liberation Sans",sans-serif' font-size="15" font-weight="700" fill="#1289a7" textLength="196.55" lengthAdjust="spacingAndGlyphs" >Africanos transportados de</text>
<text x="876.72" y="584.50" font-family='"Liberation Sans",sans-serif' font-size="15" font-weight="700" fill="#1289a7" textLength="90.83" lengthAdjust="spacingAndGlyphs" >Embarcados</text>
<text x="977.01" y="584.50" font-family='"Liberation Sans",sans-serif' font-size="15" font-weight="700" fill="#1289a7" textLength="117.36" lengthAdjust="spacingAndGlyphs" >Desembarcados</text>
<text x="1104.02" y="584.50" font-family='"Liberation Sans",sans-serif' font-size="15" font-weight="700" fill="#1289a7" textLength="90.62" lengthAdjust="spacingAndGlyphs" >Embarcados</text>
<text x="1205.01" y="584.50" font-family='"Liberation Sans",sans-serif' font-size="15" font-weight="700" fill="#1289a7" textLength="117.21" lengthAdjust="spacingAndGlyphs" >Desembarcados</text>
<text x="798.63" y="607.40" font-family='"Liberation Sans",sans-serif' font-size="15" font-weight="700" fill="#222222" textLength="66.85" lengthAdjust="spacingAndGlyphs" >Província</text>
<text x="799.00" y="628.75" font-family='"Liberation Sans",sans-serif' font-size="15" font-weight="700" fill="#222222" textLength="46.60" lengthAdjust="spacingAndGlyphs" >do Rio</text>
<text x="799.01" y="649.70" font-family='"Liberation Sans",sans-serif' font-size="15" font-weight="700" fill="#222222" textLength="17.13" lengthAdjust="spacingAndGlyphs" >de</text>
<text x="799.38" y="670.60" font-family='"Liberation Sans",sans-serif' font-size="15" font-weight="700" fill="#222222" textLength="52.85" lengthAdjust="spacingAndGlyphs" >Janeiro</text>
<text x="921.29" y="641.25" font-family='"Liberation Sans",sans-serif' font-size="15" font-weight="400" fill="#333333" textLength="46.34" lengthAdjust="spacingAndGlyphs" >36.272</text>
<text x="1048.40" y="641.25" font-family='"Liberation Sans",sans-serif' font-size="15" font-weight="400" fill="#333333" textLength="46.09" lengthAdjust="spacingAndGlyphs" >31.622</text>
<text x="1186.42" y="641.25" font-family='"Liberation Sans",sans-serif' font-size="15" font-weight="400" fill="#333333" textLength="8.11" lengthAdjust="spacingAndGlyphs" >0</text>
<text x="1313.10" y="641.25" font-family='"Liberation Sans",sans-serif' font-size="15" font-weight="400" fill="#333333" textLength="9.10" lengthAdjust="spacingAndGlyphs" >0</text>
<rect x="0" y="1020" width="1920" height="60" fill="#dadada"/>
<rect x="0" y="1019.5" width="1920" height="1.6" fill="#b5b5b5"/>
<defs><linearGradient id="sun" x1="0" y1="0" x2="0.6" y2="1"><stop offset="0" stop-color="#f7c12e"/><stop offset="1" stop-color="#f06a0e"/></linearGradient><linearGradient id="win" x1="0" y1="0" x2="1" y2="1"><stop offset="0" stop-color="#49d0fa"/><stop offset="1" stop-color="#0967d2"/></linearGradient></defs>
<circle cx="39.4" cy="1048.7" r="12.5" fill="url(#sun)"/>
<path d="M37 1056.5 A4 4 0 0 1 40.5 1050.5 A6 6 0 0 1 51 1049.5 A4 4 0 0 1 54.5 1056.5 Z" fill="#8db9ee"/>
<circle cx="48.1" cy="1037.5" r="9.8" fill="#c4291c"/>
<text x="43.91" y="1042.30" font-family='"Liberation Sans",sans-serif' font-size="13" font-weight="400" fill="#fff" textLength="8.20" lengthAdjust="spacingAndGlyphs" >3</text>
<text x="63.38" y="1044.75" font-family='"Liberation Sans",sans-serif' font-size="15.5" font-weight="400" fill="#1a1a1a" textLength="32.19" lengthAdjust="spacingAndGlyphs" >29°C</text>
<text x="62.80" y="1064.75" font-family='"Liberation Sans",sans-serif' font-size="15.5" font-weight="400" fill="#454545" textLength="110.28" lengthAdjust="spacingAndGlyphs" >Pred ensolarado</text>
<rect x="612.8" y="1036" width="14" height="13.6" rx="1" fill="url(#win)"/>
<rect x="628.2" y="1036" width="14" height="13.6" rx="1" fill="url(#win)"/>
<rect x="612.8" y="1051.4" width="14" height="13.6" rx="1" fill="url(#win)"/>
<rect x="628.2" y="1051.4" width="14" height="13.6" rx="1" fill="url(#win)"/>
<rect x="660" y="1031" width="273" height="38.3" rx="19" fill="#f1f1f1" stroke="#c9c9c9" stroke-width="1"/>
<circle cx="682.3" cy="1048.8" r="6.6" fill="none" stroke="#1d1d1d" stroke-width="2"/><path d="M687 1053.5L692 1058.6" stroke="#1d1d1d" stroke-width="2.2"/>
<text x="705.00" y="1057.00" font-family='"Liberation Sans",sans-serif' font-size="18" font-weight="400" fill="#555" textLength="72.48" lengthAdjust="spacingAndGlyphs" >Pesquisar</text>
<path d="M876 1066 L885 1060 L900 1058 L912 1052 L918 1043" fill="none" stroke="#8a4a2a" stroke-width="2.5"/><circle cx="896" cy="1046" r="7" fill="#f4b4a0"/><circle cx="909" cy="1052" r="5.5" fill="#f2a992"/><circle cx="884" cy="1042" r="4" fill="#f6c2b2"/><circle cx="896" cy="1046" r="2" fill="#d86a50"/>
<rect x="948.7" y="1044" width="22.3" height="19.7" rx="2" fill="#1e1e1e"/>
<rect x="956" y="1035.8" width="22" height="19.7" rx="2" fill="#f3f3f3" opacity="0.92"/>
<rect x="956" y="1044" width="15" height="11.5" fill="#9a9a9a"/>
<defs><linearGradient id="copL" x1="0" y1="0" x2="0" y2="1"><stop offset="0" stop-color="#1fb0f5"/><stop offset="0.5" stop-color="#3aa66a"/><stop offset="1" stop-color="#f4c60a"/></linearGradient><linearGradient id="copR" x1="0" y1="0" x2="0" y2="1"><stop offset="0" stop-color="#b04cf5"/><stop offset="0.5" stop-color="#f0508a"/><stop offset="1" stop-color="#fba35a"/></linearGradient><linearGradient id="edgG" x1="0" y1="0" x2="1" y2="0.6"><stop offset="0" stop-color="#2bb7ef"/><stop offset="0.55" stop-color="#28c3c8"/><stop offset="1" stop-color="#62d84f"/></linearGradient></defs>
<path d="M1010 1036 H1023 Q1025 1036 1024.3 1038 L1017 1054 Q1016.3 1055 1015 1055 H1006 Q1004.5 1055 1005 1053.5 Z" fill="url(#copL)"/>
<path d="M1020 1043 H1032.5 Q1034 1043 1033.5 1044.5 L1028 1061.5 Q1027.5 1062.7 1026 1062.7 H1014.5 Q1013 1062.7 1013.5 1061 Z" fill="url(#copR)"/>
<path d="M1021 1036.5 Q1025 1036 1026.5 1043 H1020Z" fill="#1b55d8"/><path d="M1012 1055 H1017.5 L1014.5 1062.5 Q1012.5 1060 1012 1055Z" fill="#f2642a"/>
<circle cx="1073.3" cy="1049.8" r="15.2" fill="url(#edgG)"/>
<path d="M1058.2 1051 Q1058 1040 1068 1042 Q1078 1044 1075 1052 Q1072 1058 1080 1059 Q1085 1059.5 1086.5 1057 Q1082 1065 1073 1065 Q1059 1064.5 1058.2 1051Z" fill="#0b62bd"/>
<path d="M1066 1053 Q1066 1047 1072 1046.5 Q1077 1047 1076.5 1051 Q1075.5 1055 1080 1056 Q1070 1059 1066 1053Z" fill="#dadada"/>
<path d="M1120 1043 L1134 1037 L1144 1042 V1060 Q1144 1063 1141 1063 H1122 Q1120 1063 1120 1060Z" fill="#1c9ee8"/><path d="M1120 1050 L1144 1050 V1060 Q1144 1063 1141 1063 H1122 Q1120 1063 1120 1060Z" fill="#38c7f2"/>
<rect x="1113.7" y="1042.5" width="15" height="15" rx="1.5" fill="#0f6cc6"/><circle cx="1121.2" cy="1050" r="4.2" fill="none" stroke="#fff" stroke-width="2"/>
<path d="M1176 1040 V1036.5 H1191 V1040" fill="none" stroke="#38b3f0" stroke-width="2"/>
<rect x="1169" y="1040" width="29" height="24.7" rx="3.5" fill="#12407e"/>
<rect x="1177.5" y="1046.5" width="5" height="5" fill="#f25022"/><rect x="1183.5" y="1046.5" width="5" height="5" fill="#7fba00"/><rect x="1177.5" y="1052.5" width="5" height="5" fill="#00a4ef"/><rect x="1183.5" y="1052.5" width="5" height="5" fill="#ffb900"/>
<rect x="1223.4" y="1034.6" width="30" height="30" rx="6" fill="#1b2340"/>
<path d="M1238.4 1040 L1247 1043 V1051 Q1247 1058 1238.4 1061 Q1229.8 1058 1229.8 1051 V1043Z" fill="none" stroke="#2fb4e8" stroke-width="2.4"/>
<path d="M1234 1055 L1243 1046" stroke="#2fb4e8" stroke-width="2"/>
<rect x="1270" y="1026" width="44" height="47.8" rx="5" fill="#eeeeee"/>
<path d="M1314 1030 Q1318 1030 1318 1035 V1066 Q1318 1072 1314 1072" fill="none" stroke="#c8c8c8" stroke-width="1"/>
<g transform="translate(1293.4,1049.5)"><circle r="15" fill="#db3b2f"/><path d="M0 0 L15 0 A15 15 0 0 1 -7.5 13 Z" fill="#fbc117"/><path d="M0 0 L-7.5 13 A15 15 0 0 1 -7.5 -13 Z" fill="#219a4a"/><path d="M0 0 L-7.5 -13 A15 15 0 0 1 15 0 Z" fill="#db3b2f"/><circle r="7" fill="#fff"/><circle r="5.6" fill="#1c73e8"/></g>
<circle cx="1304.6" cy="1038.7" r="10" fill="#5033b0"/>
<text x="1300.44" y="1043.30" font-family='"Liberation Sans",sans-serif' font-size="12" font-weight="400" fill="#fff" textLength="8.10" lengthAdjust="spacingAndGlyphs" >F</text>
<rect x="1284" y="1070.3" width="19.6" height="3" rx="1.5" fill="#0a64c8"/>
<path d="M1596.5 1053 L1603 1046.3 L1609.5 1053" fill="none" stroke="#1a1a1a" stroke-width="1.5"/>
<text x="1635.19" y="1045.70" font-family='"Liberation Sans",sans-serif' font-size="14.5" font-weight="400" fill="#1a1a1a" textLength="30.06" lengthAdjust="spacingAndGlyphs" >POR</text>
<text x="1635.00" y="1066.00" font-family='"Liberation Sans",sans-serif' font-size="14.5" font-weight="400" fill="#1a1a1a" textLength="31.37" lengthAdjust="spacingAndGlyphs" >INTL</text>
<g fill="none" stroke="#1a1a1a" stroke-width="1.5"><path d="M1689 1047 A14 14 0 0 1 1707 1047"/><path d="M1692 1050.5 A9.5 9.5 0 0 1 1704 1050.5"/><path d="M1695.2 1053.5 A5 5 0 0 1 1700.8 1053.5"/></g><circle cx="1698" cy="1056" r="1.6" fill="#1a1a1a"/>
<path d="M1718.5 1046 H1722.5 L1728 1042 V1057.5 L1722.5 1053.5 H1718.5Z" fill="none" stroke="#1a1a1a" stroke-width="1.4"/><path d="M1731 1046.5 Q1733 1049.8 1731 1053 M1733.8 1044 Q1737 1049.8 1733.8 1055.5 M1736.5 1042 Q1741 1049.8 1736.5 1057.5" fill="none" stroke="#1a1a1a" stroke-width="1.4"/>
<rect x="1748.5" y="1044.5" width="16" height="11" rx="2" fill="none" stroke="#1a1a1a" stroke-width="1.5"/><rect x="1765" y="1047.5" width="2.5" height="5" fill="#1a1a1a"/><path d="M1751 1054 L1756 1049 V1054Z" fill="#1a1a1a"/><path d="M1752.5 1041 L1750 1046 L1753.5 1045.5 L1751.5 1050" fill="none" stroke="#1a1a1a" stroke-width="1.2"/>
<text x="1827.29" y="1044.80" font-family='"Liberation Sans",sans-serif' font-size="15.5" font-weight="400" fill="#1a1a1a" >15:10</text>
<text x="1788.22" y="1064.60" font-family='"Liberation Sans",sans-serif' font-size="15.5" font-weight="400" fill="#1a1a1a" textLength="77.90" lengthAdjust="spacingAndGlyphs" >28/03/2025</text>
<path d="M1878 1055.5 H1893.5 L1891 1052 V1047 A5.8 5.8 0 0 0 1880.5 1047 V1052Z" fill="#1a1a1a"/><path d="M1883 1057 A2.8 2.8 0 0 0 1888.6 1057" fill="#1a1a1a"/><text x="1882" y="1053" font-family='"Liberation Sans",sans-serif' font-size="7" font-weight="700" fill="#fff">z</text><text x="1888" y="1046" font-family='"Liberation Sans",sans-serif' font-size="7" font-weight="700" fill="#1a1a1a">z</text>
</svg>
</body></html>
